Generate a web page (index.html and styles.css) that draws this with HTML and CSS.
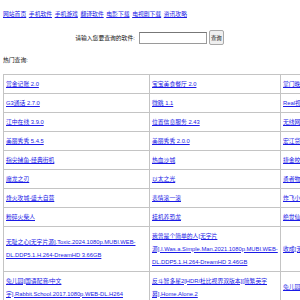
FILE: index.html
```html
<!DOCTYPE html>
<html lang="zh-CN">
<head>
    <meta charset="UTF-8">
    <meta name="viewport" content="width=device-width, initial-scale=1.0">
    <title>软件查询</title>
    <link rel="stylesheet" href="styles.css">
</head>
<body>
    <p class="nav">
        <a href="#">网站首页</a>
        <a href="#">手机软件</a>
        <a href="#">手机游戏</a>
        <a href="#">翻译软件</a>
        <a href="#">电影下载</a>
        <a href="#">电视剧下载</a>
        <a href="#">资讯攻略</a>
    </p>
    <form class="search">
        <label for="kw">请输入您要查询的软件:</label>
        <input type="text" id="kw" class="search-input">
        <button type="button" class="search-btn">查询</button>
    </form>
    <p class="hot-title">热门查询:</p>
    <table class="hot">
        <tr>
            <td class="c1"><a href="#">赏金记账 2.0</a></td>
            <td class="c2"><a href="#">宝宝美食餐厅 2.0</a></td>
            <td class="c3"><a href="#">掌门晚报 1.0</a></td>
        </tr>
        <tr>
            <td><a href="#">G3通话 2.7.0</a></td>
            <td><a href="#">微跳 1.1</a></td>
            <td><a href="#">Real视频播放器 高清版 1.0</a></td>
        </tr>
        <tr>
            <td><a href="#">江中在线 3.9.0</a></td>
            <td><a href="#">位置信息服务 2.43</a></td>
            <td><a href="#">无线网络 1.0</a></td>
        </tr>
        <tr>
            <td><a href="#">美丽秀秀 5.4.5</a></td>
            <td><a href="#">美丽秀秀 2.0.0</a></td>
            <td><a href="#">宏江贷 1.0</a></td>
        </tr>
        <tr>
            <td><a href="#">指尖捕鱼-经典街机</a></td>
            <td><a href="#">热血沙城</a></td>
            <td><a href="#">捷金校园</a></td>
        </tr>
        <tr>
            <td><a href="#">魔龙之刃</a></td>
            <td><a href="#">以太之光</a></td>
            <td><a href="#">勇者物语</a></td>
        </tr>
        <tr>
            <td><a href="#">烽火攻城-盛大自营</a></td>
            <td><a href="#">表情滚一滚</a></td>
            <td><a href="#">炸飞小鸟</a></td>
        </tr>
        <tr>
            <td><a href="#">粉碎火柴人</a></td>
            <td><a href="#">挂机养恐龙</a></td>
            <td><a href="#">绝世仙王</a></td>
        </tr>
        <tr>
            <td><a href="#">无耻之心[无字片源].Toxic.2024.1080p.MUBI.WEB-DL.DDP5.1.H.264-DreamHD 3.66GB</a></td>
            <td><a href="#">我曾是个简单的人[无字片源].I.Was.a.Simple.Man.2021.1080p.MUBI.WEB-DL.DDP5.1.H.264-DreamHD 3.46GB</a></td>
            <td><a href="#">收成[无字].Harvest.WEB-DL.DDP5.1</a></td>
        </tr>
        <tr>
            <td><a href="#">兔儿园[国语配音/中文字].Rabbit.School.2017.1080p.WEB-DL.H264</a></td>
            <td><a href="#">反斗智多星2[HDR/杜比视界双版本][简繁英字幕].Home.Alone.2</a></td>
            <td><a href="#">兔儿园2[国语配音]</a></td>
        </tr>
    </table>
</body>
</html>
```

FILE: styles.css
```css
html {
    overflow: hidden;
}

body {
    margin: 4px 0 0 3px;
    font-family: "Liberation Sans", "Noto Sans CJK SC", sans-serif;
    font-size: 5.8px;
    color: #111;
    background-color: #fff;
}

a {
    color: #1a1ae6;
}

.nav {
    margin: 4px 0 0 0;
    line-height: 13px;
    word-spacing: 1px;
}

.search {
    display: flex;
    align-items: center;
    justify-content: center;
    width: 293px;
    height: 15px;
    margin-top: 9px;
}

.search label {
    margin-right: 4px;
}

.search-input {
    box-sizing: border-box;
    width: 68px;
    height: 12px;
    margin: 0 2px 0 0;
    padding: 0;
    border: 1px solid #9a9a9a;
    border-top-color: #777;
}

.search-btn {
    box-sizing: border-box;
    width: 15px;
    height: 15px;
    padding: 0;
    font-family: inherit;
    font-size: 5.4px;
    color: #111;
    background-color: #efefef;
    border: 1px solid #a8a8a8;
    border-radius: 2px;
}

.hot-title {
    margin: 9px 0 0 0;
    line-height: 13px;
}

.hot {
    margin-top: 7px;
    border-collapse: collapse;
    table-layout: fixed;
    width: 420px;
    border: 1px solid #bdbdbd;
}

.hot td {
    border: 1px solid #c4c4c4;
    padding: 2.5px 2px;
    line-height: 13px;
    vertical-align: middle;
    word-wrap: break-word;
}

.c1 {
    width: 141px;
}

.c2 {
    width: 126px;
}
```
